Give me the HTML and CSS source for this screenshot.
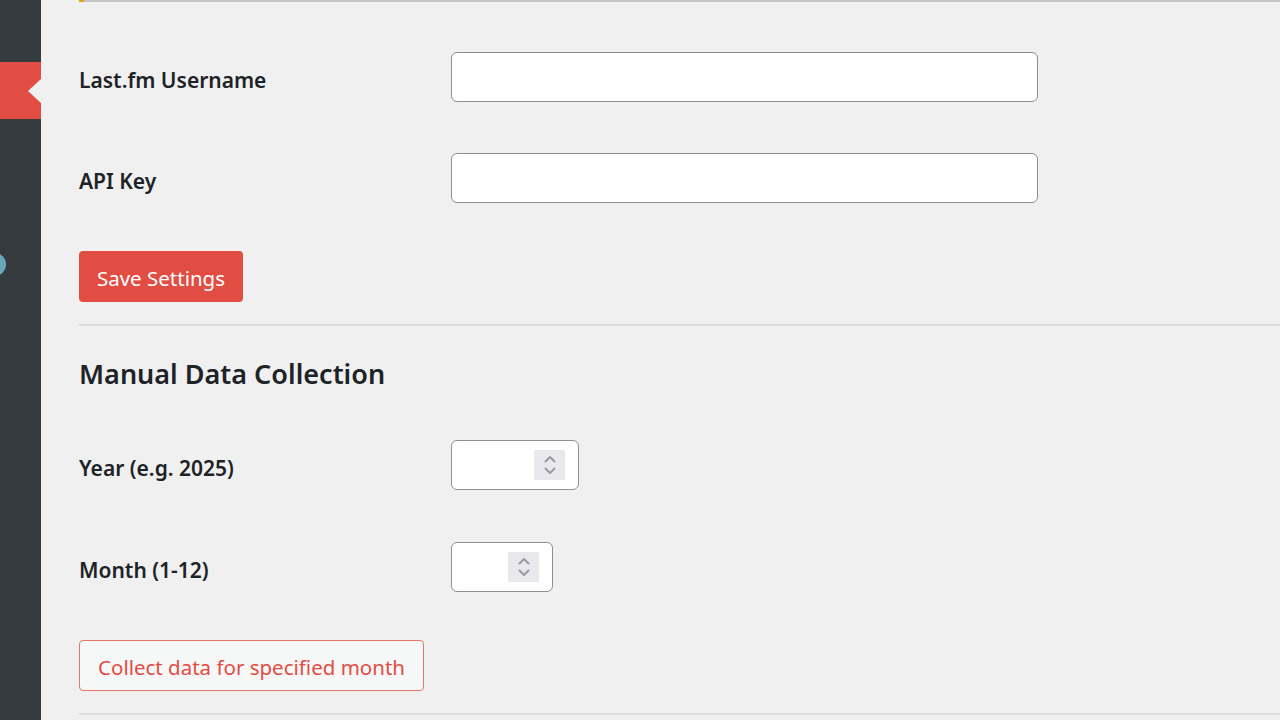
FILE: index.html
```html
<!DOCTYPE html>
<html lang="en">
<head>
<meta charset="utf-8">
<title>Last.fm Settings</title>
<link rel="stylesheet" href="styles.css">
</head>
<body>
<div class="layout">
  <nav class="sidebar">
    <div class="menu-top"></div>
    <div class="menu-current"><span class="menu-arrow"></span></div>
    <span class="menu-badge"></span>
  </nav>
  <main class="main">
    <div class="notice"></div>
    <form class="settings">
      <div class="form-row row-first">
        <label class="field-label" for="username">Last.fm Username</label>
        <input class="text-input" id="username" type="text">
      </div>
      <div class="form-row row-last">
        <label class="field-label" for="apikey">API Key</label>
        <input class="text-input" id="apikey" type="text">
      </div>
      <button class="btn-primary" type="button">Save Settings</button>
    </form>
    <hr class="divider">
    <h2 class="section-title">Manual Data Collection</h2>
    <div class="collect">
      <div class="form-row row-year">
        <label class="field-label" for="year">Year (e.g. 2025)</label>
        <div class="num-box num-year">
          <input class="num-input" id="year" type="text">
          <span class="spin">
            <svg width="12" height="20" viewBox="0 0 12 20"><path d="M1.5 6.5 L6 2 L10.5 6.5 M1.5 13.5 L6 18 L10.5 13.5" fill="none" stroke="#9b9aa4" stroke-width="2" stroke-linecap="round" stroke-linejoin="round"/></svg>
          </span>
        </div>
      </div>
      <div class="form-row row-last">
        <label class="field-label" for="month">Month (1-12)</label>
        <div class="num-box num-month">
          <input class="num-input" id="month" type="text">
          <span class="spin">
            <svg width="12" height="20" viewBox="0 0 12 20"><path d="M1.5 6.5 L6 2 L10.5 6.5 M1.5 13.5 L6 18 L10.5 13.5" fill="none" stroke="#9b9aa4" stroke-width="2" stroke-linecap="round" stroke-linejoin="round"/></svg>
          </span>
        </div>
      </div>
      <button class="btn-secondary" type="button">Collect data for specified month</button>
    </div>
    <hr class="divider divider-bottom">
  </main>
</div>
</body>
</html>
```

FILE: styles.css
```css
* { box-sizing: border-box; }
html, body { margin: 0; padding: 0; }
body {
  background: #f0f0f1;
  font-family: "Noto Sans", "Open Sans", sans-serif;
  color: #1d2327;
  width: 1280px;
  height: 720px;
  overflow: hidden;
}
.layout { display: flex; height: 720px; }
.sidebar {
  width: 41px;
  flex: none;
  background: #363b3f;
  position: relative;
}
.menu-top { height: 62px; }
.menu-current {
  height: 57px;
  background: #e14d43;
  position: relative;
}
.menu-arrow {
  position: absolute;
  right: 0;
  top: 17px;
  width: 0;
  height: 0;
  border-top: 12px solid transparent;
  border-bottom: 12px solid transparent;
  border-right: 13px solid #f0f0f1;
}
.menu-badge {
  position: absolute;
  left: -17px;
  top: 253px;
  width: 23px;
  height: 23px;
  border-radius: 50%;
  background: #69a8bb;
}
.main { flex: 1; padding-left: 38px; }
.notice {
  height: 2px;
  background: #c3c4c7;
  border-left: 5px solid #dba617;
}
.settings { padding-top: 50px; }
.form-row {
  display: grid;
  grid-template-columns: 372px 1fr;
  align-items: start;
  margin-bottom: 51px;
}
.form-row.row-year { margin-bottom: 52px; }
.form-row.row-last { margin-bottom: 48px; }
.field-label {
  font-size: 21px;
  font-weight: 600;
  line-height: 27px;
  padding-top: 15px;
  color: #1d2327;
}
.text-input {
  width: 587px;
  height: 50px;
  border: 1.5px solid #8c8f94;
  border-radius: 6px;
  background: #fff;
  font: inherit;
  padding: 0 12px;
}
.btn-primary {
  display: block;
  height: 51px;
  width: 164px;
  padding: 3px 0 0;
  border: none;
  border-radius: 4px;
  background: #e14d43;
  color: #fff;
  font-family: inherit;
  font-size: 20.5px;
  line-height: 1;
}
.divider {
  border: none;
  height: 2px;
  background: #dcdcde;
  margin: 22px 0 0;
}
.section-title {
  font-size: 27px;
  font-weight: 600;
  line-height: 35px;
  margin: 30px 0 0;
  color: #1d2327;
}
.collect { padding-top: 49px; }
.num-box {
  height: 50px;
  border: 1.5px solid #8c8f94;
  border-radius: 6px;
  background: #fff;
  display: flex;
  align-items: center;
  padding-right: 13px;
}
.num-year { width: 128px; }
.num-month { width: 102px; }
.num-input {
  flex: 1;
  min-width: 0;
  border: none;
  background: transparent;
  height: 100%;
  font: inherit;
  outline: none;
}
.spin {
  width: 31px;
  height: 30px;
  flex: none;
  background: #e9e9ed;
  display: flex;
  align-items: center;
  justify-content: center;
}
.btn-secondary {
  display: block;
  height: 51px;
  width: 345px;
  padding: 3px 0 0;
  border: 1.5px solid #e8766e;
  border-radius: 4px;
  background: #f6f7f7;
  color: #e14d43;
  font-family: inherit;
  font-size: 20.5px;
  line-height: 1;
}
.divider-bottom { margin-top: 22px; }
```
